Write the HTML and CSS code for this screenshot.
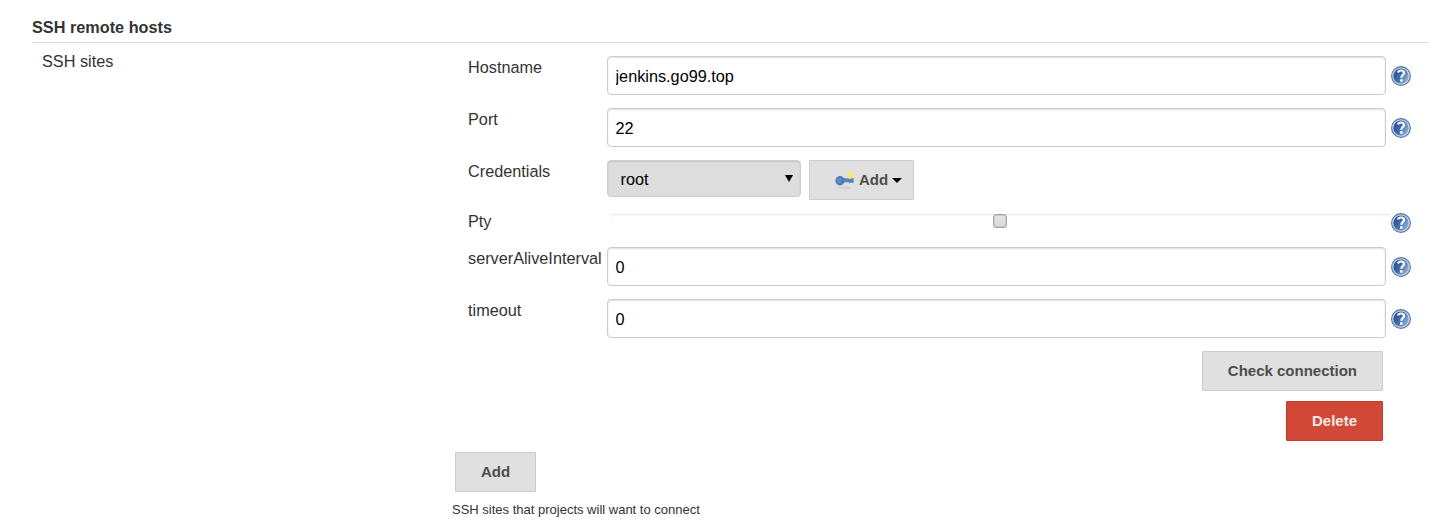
FILE: index.html
```html
<!DOCTYPE html>
<html lang="en">
<head>
<meta charset="utf-8">
<title>SSH remote hosts</title>
<link rel="stylesheet" href="styles.css">
</head>
<body>
<svg width="0" height="0" class="defs" aria-hidden="true">
  <defs>
    <linearGradient id="disc" x1="0" y1="0" x2="1" y2="0.5">
      <stop offset="0" stop-color="#1d4b8c"/><stop offset=".5" stop-color="#3b67a6"/><stop offset="1" stop-color="#87a7d2"/>
    </linearGradient>
    <symbol id="help" viewBox="0 0 20 20">
      <circle cx="10" cy="10" r="9.4" fill="#c3d1e7" stroke="#54779f" stroke-width="1.1"/>
      <circle cx="10" cy="10" r="7.6" fill="url(#disc)"/>
      <path d="M7 6.6C7.4 5 8.5 4.5 10 4.5c1.9 0 3 .9 3 2.4 0 2.1-2.7 2.2-2.7 4.8" fill="none" stroke="#fff" stroke-width="2.2"/>
      <rect x="9.1" y="13.2" width="2.5" height="2.5" fill="#fff"/>
    </symbol>
  </defs>
</svg>
<section class="section">
  <h2 class="section-title">SSH remote hosts</h2>
  <div class="section-body">
    <div class="section-label">SSH sites</div>
    <div class="sites">
      <div class="site">
        <div class="row">
          <label class="label" for="host">Hostname</label>
          <input class="field" id="host" type="text" value="jenkins.go99.top">
          <svg class="help"><use href="#help"/></svg>
        </div>
        <div class="row">
          <label class="label" for="port">Port</label>
          <input class="field" id="port" type="text" value="22">
          <svg class="help"><use href="#help"/></svg>
        </div>
        <div class="row row-credentials">
          <span class="label">Credentials</span>
          <div class="credentials">
            <div class="select"><span>root</span><svg width="8" height="7" viewBox="0 0 8 7"><path d="M0 0h8L4 7z"/></svg></div>
            <button class="button button-key" type="button">
              <svg class="key" width="20" height="18" viewBox="0 0 20 18">
                <ellipse cx="10" cy="15.7" rx="7" ry="1" fill="#cecece"/>
                <path d="M7 6.3h11.7v3.6l-1.2 1.4-1.3-1-1.3 1.2-1.3-1.2H7z" fill="#5685bd"/>
                <ellipse cx="5" cy="8.8" rx="4.6" ry="4.7" fill="#4c7db8"/>
                <ellipse cx="4.3" cy="8.6" rx="2.4" ry="3" fill="#5f8dc4"/>
                <circle cx="15" cy="3.4" r="3.3" fill="#ece68f"/>
                <circle cx="15" cy="3.4" r="2.1" fill="#f8ee58"/>
              </svg>
              <span>Add</span>
              <svg class="caret" width="10" height="5" viewBox="0 0 10 5"><path d="M0 0h10L5 5z"/></svg>
            </button>
          </div>
        </div>
        <div class="row row-pty">
          <span class="label">Pty</span>
          <div class="pty"><span class="check"></span></div>
          <svg class="help"><use href="#help"/></svg>
        </div>
        <div class="row">
          <label class="label" for="alive">serverAliveInterval</label>
          <input class="field" id="alive" type="text" value="0">
          <svg class="help"><use href="#help"/></svg>
        </div>
        <div class="row">
          <label class="label" for="timeout">timeout</label>
          <input class="field" id="timeout" type="text" value="0">
          <svg class="help"><use href="#help"/></svg>
        </div>
        <div class="actions">
          <button class="button" type="button">Check connection</button>
          <button class="button button-danger" type="button">Delete</button>
        </div>
      </div>
      <button class="button button-add" type="button">Add</button>
      <p class="description">SSH sites that projects will want to connect</p>
    </div>
  </div>
</section>
</body>
</html>
```

FILE: styles.css
```css
* { box-sizing: border-box; }
body {
  margin: 0;
  height: 523px;
  overflow: hidden;
  background: #fff;
  color: #333;
  font: 16.25px/22px "Liberation Sans", Arial, sans-serif;
}
.defs, svg { display: block; flex: none; }
.section { padding: 16px 0 0 32px; }
.section-title {
  height: 27px;
  margin: 0;
  border-bottom: 1px solid #ddd;
  font-size: 16.25px;
  line-height: 22px;
}
.section-body { display: grid; grid-template-columns: 420px 1fr; }
.section-label { padding: 7px 0 0 10px; }
.sites { padding-top: 13px; }
.site { padding-left: 16px; }
.row {
  display: grid;
  grid-template-columns: 139px 779px 20px;
  column-gap: 0;
  align-items: start;
  height: 52px;
}
.label { line-height: 22px; white-space: nowrap; }
.field {
  width: 779px;
  height: 39px;
  padding: 2px 7.5px 0;
  border: 1px solid #ccc;
  border-radius: 4px;
  background: #fff;
  box-shadow: inset 0 1px 2px rgba(0, 0, 0, .12);
  color: #000;
  font: 16.25px "Liberation Sans", Arial, sans-serif;
  outline: none;
}
.help { width: 20px; height: 20px; margin: 10px 0 0 5px; }
.row-credentials { height: 50px; }
.credentials { display: flex; align-items: flex-start; gap: 8px; }
.select {
  display: flex;
  align-items: center;
  justify-content: space-between;
  width: 194px;
  height: 37px;
  padding: 0 7px 0 12.5px;
  border: 1px solid #ccc;
  border-radius: 4px;
  background: #ddd;
  box-shadow: inset 0 1px 2px rgba(0, 0, 0, .1);
  color: #000;
}
.button {
  height: 40px;
  padding: 0 25px;
  border: 1px solid #ccc;
  border-radius: 1px;
  background: #e0e0e0;
  color: #4d4d4d;
  font: bold 15px/38px "Liberation Sans", Arial, sans-serif;
}
.button-key { display: flex; align-items: center; width: 105px; }
.key { margin-top: 1px; }
.button-key span { margin-left: 4px; }
.caret { margin-left: 4px; }
.row-pty { height: 37px; }
.pty {
  display: flex;
  justify-content: center;
  width: 779px;
  height: 16px;
  margin: 4px 0 0 4px;
  border-top: 1px solid #e8e8e8;
  border-left: 1px solid #fafafa;
  box-shadow: inset 0 1px 1px #fafafa;
}
.row-pty .help { margin-top: 3px; }
.check {
  width: 14px;
  height: 14px;
  margin: -1px 2px 0 0;
  border: 1px solid #a2a2a2;
  border-radius: 3px;
  background: linear-gradient(#e5e5e5, #d9d9d9);
  box-shadow: inset 0 0 0 1px #ccc;
}
.actions {
  display: flex;
  flex-direction: column;
  align-items: flex-end;
  gap: 10px;
  width: 915px;
}
.button-danger { border-color: #bd3d2e; background: #d14836; color: #f5e9e7; }
.button-add { display: block; margin: 11px 0 0 3px; }
.description { margin: 7px 0 0; font-size: 13px; }
```
